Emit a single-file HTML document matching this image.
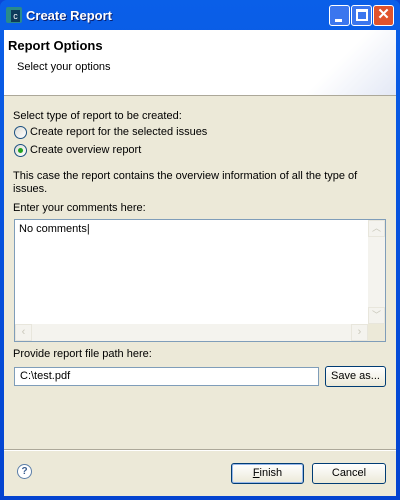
<!DOCTYPE html>
<html><head><style>
*{margin:0;padding:0;box-sizing:border-box}
body{width:400px;height:500px;overflow:hidden;font:11px "Liberation Sans",sans-serif;color:#000;background:#0a47d8}
.win{position:absolute;left:0;top:0;width:400px;height:500px;background:linear-gradient(#0a5fe8,#0343d0);border-radius:7px 7px 0 0}
.title{position:absolute;left:26px;top:8px;color:#fff;font-weight:bold;font-size:13px;text-shadow:1px 1px #0a1e6a}
.client{position:absolute;left:4px;top:30px;width:392px;height:466px;background:#ece9d8}
.hdr{position:absolute;left:0;top:0;width:392px;height:66px;background:linear-gradient(135deg,#fff 80%,#e3e8f5);border-bottom:1px solid #aca899}
.t{position:absolute;white-space:nowrap}
.radio{position:absolute;width:13px;height:13px;border-radius:50%;border:1px solid #1c5180;background:linear-gradient(135deg,#dcdcd6,#fff)}
.btn{position:absolute;border:1px solid #003c74;border-radius:3px;background:linear-gradient(#fff,#ece9d8);text-align:center;line-height:18px}
.tb{position:absolute;width:17px;height:17px;border:1px solid #fff;border-radius:3px}
</style></head><body>
<div class="win">
<div style="position:absolute;left:6px;top:7px;width:16px;height:16px;background:#2a8a8a;border-radius:2px"><div style="position:absolute;left:5px;top:3px;width:9px;height:12px;background:#0e3b5a;color:#fff;font-size:9px;line-height:12px;text-align:center">c</div></div>
<div class="title">Create Report</div>
<div class="tb" style="left:329px;top:5px;width:21px;height:21px;background:#3b76ee"><div style="position:absolute;left:5px;top:13px;width:7px;height:3px;background:#fff"></div></div>
<div class="tb" style="left:351px;top:5px;width:21px;height:21px;background:#3b76ee"><div style="position:absolute;left:4px;top:3px;width:12px;height:12px;border:2px solid #fff;border-top-width:3px"></div></div>
<div class="tb" style="left:373px;top:5px;width:21px;height:21px;background:#e0532c;color:#fff;font-weight:bold;font-size:15px;line-height:18px;text-align:center">✕</div>
<div class="client">
<div class="hdr">
<div class="t" style="left:4px;top:8px;font-weight:bold;font-size:13px">Report Options</div>
<div class="t" style="left:13px;top:31px">Select your options</div>
</div>
<div class="t" style="left:9px;top:80px">Select type of report to be created:</div>
<div class="radio" style="left:10px;top:96px"></div>
<div class="t" style="left:26px;top:96px">Create report for the selected issues</div>
<div class="radio" style="left:10px;top:114px"><div style="position:absolute;left:3px;top:3px;width:5px;height:5px;border-radius:50%;background:#21a121"></div></div>
<div class="t" style="left:26px;top:114px">Create overview report</div>
<div class="t" style="left:9px;top:140px">This case the report contains the overview information of all the type of</div>
<div class="t" style="left:9px;top:153px">issues.</div>
<div class="t" style="left:9px;top:172px">Enter your comments here:</div>
<div style="position:absolute;left:10px;top:189px;width:372px;height:123px;border:1px solid #7f9db9;background:#fff">
<div class="t" style="left:4px;top:3px">No comments|</div>
<div style="position:absolute;right:0;top:0;width:17px;height:104px;background:#f4f3ee"><div style="height:17px;margin:0 0 0 0;border:1px solid #e8e6dc;color:#c9c7ba;text-align:center;font-size:9px;line-height:15px">︿</div><div style="position:absolute;bottom:0;width:17px;height:17px;border:1px solid #e8e6dc;color:#c9c7ba;text-align:center;font-size:9px;line-height:15px">﹀</div></div>
<div style="position:absolute;left:0;bottom:0;width:353px;height:17px;background:#f4f3ee"><div style="position:absolute;left:0;width:17px;height:17px;border:1px solid #e8e6dc;color:#c9c7ba;text-align:center;line-height:15px">‹</div><div style="position:absolute;right:0;width:17px;height:17px;border:1px solid #e8e6dc;color:#c9c7ba;text-align:center;line-height:15px">›</div></div>
<div style="position:absolute;right:0;bottom:0;width:17px;height:17px;background:#ece9d8"></div>
</div>
<div class="t" style="left:9px;top:318px">Provide report file path here:</div>
<div style="position:absolute;left:10px;top:337px;width:305px;height:19px;border:1px solid #7f9db9;background:#fff"><div class="t" style="left:5px;top:2px">C:\test.pdf</div></div>
<div class="btn" style="left:321px;top:336px;width:61px;height:21px">Save as...</div>
<div style="position:absolute;left:0;top:419px;width:392px;height:2px;border-top:1px solid #aca899;border-bottom:1px solid #fff"></div>
<div style="position:absolute;left:13px;top:434px;width:15px;height:15px;border-radius:50%;border:1px solid #5b7ea8;background:#fff;color:#3a5e90;font-weight:bold;font-size:10px;text-align:center;line-height:13px">?</div>
<div class="btn" style="left:227px;top:433px;width:73px;height:21px;box-shadow:inset 0 0 0 1px #98b8ea"><u>F</u>inish</div>
<div class="btn" style="left:308px;top:433px;width:74px;height:21px">Cancel</div>
</div>
</div>
</body></html>
